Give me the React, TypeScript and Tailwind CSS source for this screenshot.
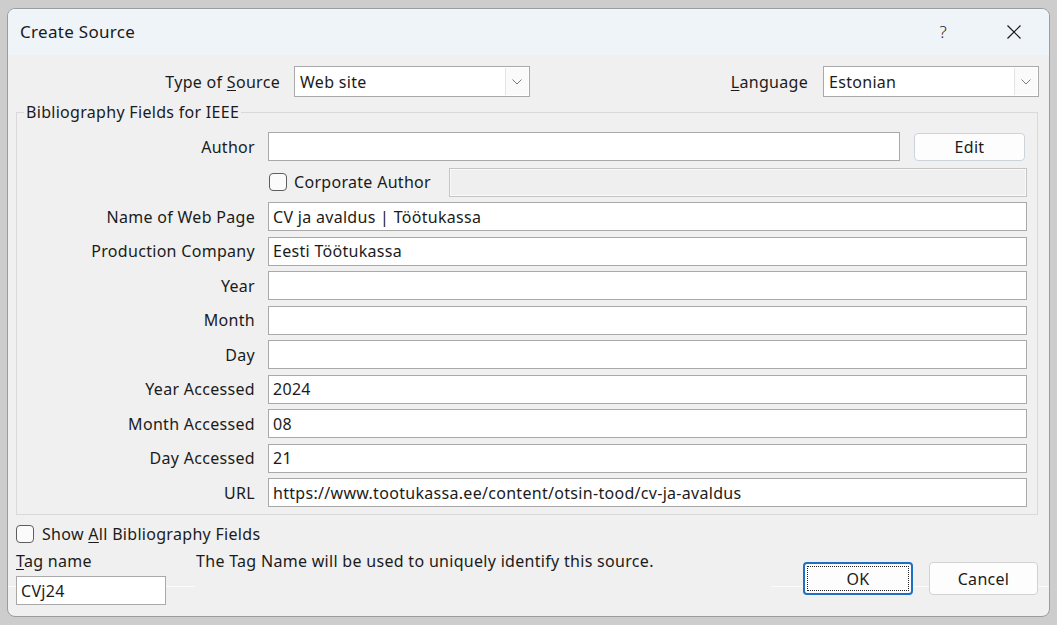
import React from "react";

const font = { fontFamily: '"Noto Sans", "Open Sans", sans-serif' };

function Chevron() {
  return (
    <svg width="10" height="6" viewBox="0 0 10 6" fill="none">
      <path d="M0.5 0.5 L5 5 L9.5 0.5" stroke="#7a7a7a" strokeWidth="1" />
    </svg>
  );
}

function Select({ value, width }: { value: string; width: string }) {
  return (
    <div className={`${width} h-[31px] flex bg-white border border-[#a9a9a9]`}>
      <div className="flex-1 flex items-center pl-[5px] text-[#1b1b1b]">{value}</div>
      <div className="w-[23px] my-[1px] mr-[1px] flex items-center justify-center bg-[#fafafa] border-l border-[#e4e4e4]">
        <Chevron />
      </div>
    </div>
  );
}

function TextBox({ value = "", className = "" }: { value?: string; className?: string }) {
  return (
    <div
      className={`h-[29px] flex items-center pl-[4px] bg-white border border-[#a9a9a9] text-[#1b1b1b] whitespace-nowrap overflow-hidden ${className}`}
    >
      {value}
    </div>
  );
}

function CheckBox() {
  return <div className="w-[18px] h-[18px] shrink-0 rounded-[4px] border border-[#5e5e5e] bg-[#fbfbfb]" />;
}

const fields: [string, string][] = [
  ["Name of Web Page", "CV ja avaldus | Töötukassa"],
  ["Production Company", "Eesti Töötukassa"],
  ["Year", ""],
  ["Month", ""],
  ["Day", ""],
  ["Year Accessed", "2024"],
  ["Month Accessed", "08"],
  ["Day Accessed", "21"],
  ["URL", "https://www.tootukassa.ee/content/otsin-tood/cv-ja-avaldus"],
];

export default function App() {
  return (
    <div className="w-[1057px] h-[625px] bg-[#cdcdcd] pt-[8px] pl-[7px] overflow-hidden" style={font}>
      <div className="relative isolate w-[1043px] h-[609px] rounded-[8px] border border-[#9c9c9c] bg-[#f0f0f0] overflow-hidden text-[16px] tracking-[0.3px] text-[#1b1b1b]">
        {/* faint separator lines behind the bottom controls */}
        <div className="absolute -z-10 top-[577px] left-0 w-[187px] h-px bg-[#fbfbfb]" />
        <div className="absolute -z-10 top-[577px] left-[763px] right-0 h-px bg-[#fbfbfb]" />

        {/* title bar */}
        <div className="h-[46px] bg-[#eef4f8] flex items-center pl-[12px]">
          <span className="text-[17px] text-[#1a1a1a]">Create Source</span>
          <span className="ml-auto mr-[60px] text-[17px] text-[#222] font-light">?</span>
          <svg className="mr-[28px]" width="14" height="14" viewBox="0 0 14 14">
            <path d="M0.5 0.5 L13.5 13.5 M13.5 0.5 L0.5 13.5" stroke="#1a1a1a" strokeWidth="1.2" />
          </svg>
        </div>

        {/* type / language */}
        <div className="flex items-center mt-[11px]">
          <div className="w-[286px] pr-[14px] text-right">
            Type of <span className="underline underline-offset-2">S</span>ource
          </div>
          <Select value="Web site" width="w-[236px]" />
          <div className="w-[293px] pr-[15px] text-right">
            <span className="underline underline-offset-2">L</span>anguage
          </div>
          <Select value="Estonian" width="w-[216px]" />
        </div>

        {/* bibliography group */}
        <fieldset className="ml-[8px] mt-[6px] w-[1022px] border border-[#d9d9d9] pr-[10px] pb-[7px]">
          <legend className="ml-[7px] px-[2px] leading-[18px]">Bibliography Fields for IEEE</legend>
          <div className="flex flex-col gap-[5.5px] mt-[11px]">
            <div className="flex items-center">
              <div className="w-[251px] pr-[13px] text-right">Author</div>
              <TextBox className="w-[632px]" />
              <div className="ml-[14px] w-[111px] h-[28px] flex items-center justify-center rounded-[4px] border border-[#cdd3da] bg-[#fdfdfd]">
                Edit
              </div>
            </div>
            <div className="flex items-center h-[29px] mt-[1px]">
              <div className="w-[251px]" />
              <div className="w-[181px] flex items-center pl-[1px]">
                <CheckBox />
                <span className="ml-[7px] whitespace-nowrap">Corporate Author</span>
              </div>
              <div className="flex-1 h-[29px] border border-[#c4c4c4] bg-[#efefef] shadow-[inset_0_0_0_1px_#fafafa]" />
            </div>
            {fields.map(([label, value]) => (
              <div key={label} className="flex items-center">
                <div className="w-[251px] pr-[13px] text-right whitespace-nowrap">{label}</div>
                <TextBox value={value} className="flex-1" />
              </div>
            ))}
          </div>
        </fieldset>

        {/* show all */}
        <div className="flex items-center ml-[8px] mt-[10px] h-[18px]">
          <CheckBox />
          <span className="ml-[8px]">
            Show <span className="underline underline-offset-2">A</span>ll Bibliography Fields
          </span>
        </div>

        {/* tag name + buttons */}
        <div className="flex items-start mt-[8px] ml-[8px] mr-[11px]">
          <div className="flex flex-col w-[150px]">
            <div className="h-[20px] leading-[20px]">
              <span className="underline underline-offset-2">T</span>ag name
            </div>
            <TextBox value="CVj24" className="mt-[5px] w-[150px]" />
          </div>
          <div className="ml-[30px] h-[20px] leading-[20px]">
            The Tag Name will be used to uniquely identify this source.
          </div>
          <div className="ml-auto mt-[11px] flex gap-[16px]">
            <div className="w-[110px] h-[33px] rounded-[4px] border-2 border-[#1f6fc6] bg-[#fdfdfd] p-[2px]">
              <div className="w-full h-full border border-dotted border-[#222] flex items-center justify-center">
                OK
              </div>
            </div>
            <div className="w-[109px] h-[33px] rounded-[4px] border border-[#d2d2d2] bg-[#fdfdfd] flex items-center justify-center">
              Cancel
            </div>
          </div>
        </div>
      </div>
    </div>
  );
}
